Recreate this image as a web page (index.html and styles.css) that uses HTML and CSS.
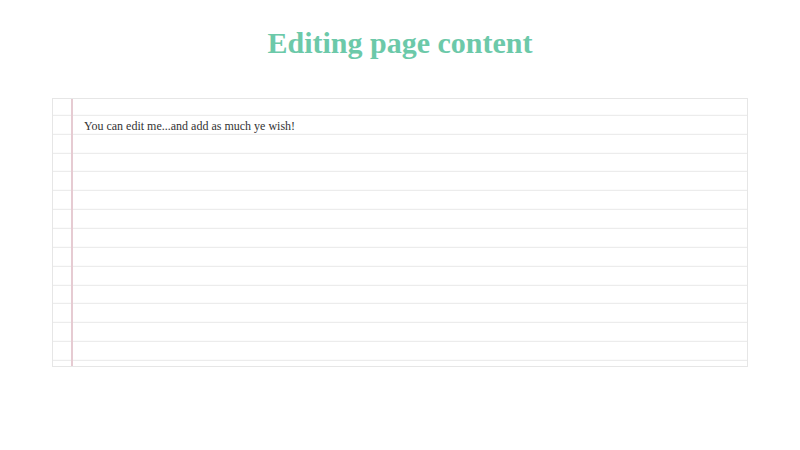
FILE: index.html
```html
<!DOCTYPE html>
<html>
<head>
<meta charset="utf-8">
<link rel="stylesheet" href="styles.css">
</head>
<body>
<h1 class="title">Editing page content</h1>
<div class="paper" contenteditable="true">
  <p class="line">You can edit me...and add as much ye wish!</p>
</div>
</body>
</html>
```
FILE: styles.css
```css
html, body {
  margin: 0;
  padding: 0;
  background: #fff;
}
body {
  font-family: "Liberation Serif", "Times New Roman", serif;
}
.title {
  margin: 25px 0 0;
  text-align: center;
  font-size: 30px;
  line-height: 36px;
  font-weight: bold;
  color: #6cc9a9;
}
.paper {
  box-sizing: border-box;
  margin: 37px 52px 0;
  height: 269px;
  border: 1px solid #e6e6e6;
  padding: 18px 0 0 31px;
  background-color: #fff;
  background-image:
    linear-gradient(to right, transparent 18px, #e6cbd2 18px, #e6cbd2 20px, transparent 20px),
    repeating-linear-gradient(to bottom, transparent 0, transparent 17.85px, #e8e8e8 17.85px, #e8e8e8 18.85px);
  background-position: 0 0, 0 -2.2px;
  outline: none;
}
.line {
  margin: 0;
  font-size: 12px;
  line-height: 18.85px;
  color: #333;
}
```
